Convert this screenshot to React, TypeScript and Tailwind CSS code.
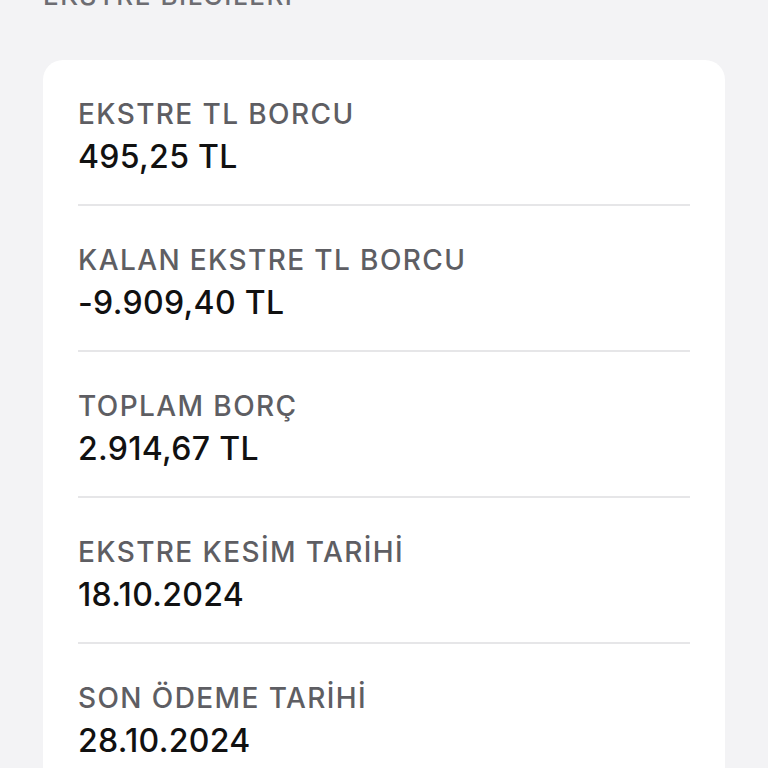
import React from "react";

const rows = [
  { label: "EKSTRE TL BORCU", value: "495,25 TL" },
  { label: "KALAN EKSTRE TL BORCU", value: "-9.909,40 TL" },
  { label: "TOPLAM BORÇ", value: "2.914,67 TL" },
  { label: "EKSTRE KESİM TARİHİ", value: "18.10.2024" },
  { label: "SON ÖDEME TARİHİ", value: "28.10.2024" },
];

export default function App() {
  return (
    <div className="h-[768px] overflow-hidden bg-[#f3f3f5] px-[43px] font-['Inter',sans-serif]">
      <div className="-mt-[20px] h-[32px] text-[26px] leading-[32px] font-medium tracking-[0.06em] text-[#6d6d72]">
        EKSTRE BİLGİLERİ
      </div>
      <div className="mt-[48px] rounded-[20px] bg-white px-[35px]">
        {rows.map((r, i) => (
          <div
            key={r.label}
            className={
              i < rows.length - 1
                ? "border-b-2 border-[#e6e6e8] pt-[38px] pb-[27px]"
                : "pt-[38px] pb-[27px]"
            }
          >
            <div className="text-[28px] leading-[32px] font-medium tracking-[0.05em] text-[#5e5e63]">{r.label}</div>
            <div className="mt-[7px] text-[32px] leading-[40px] font-medium tracking-[0.01em] text-[#111]">{r.value}</div>
          </div>
        ))}
      </div>
    </div>
  );
}
